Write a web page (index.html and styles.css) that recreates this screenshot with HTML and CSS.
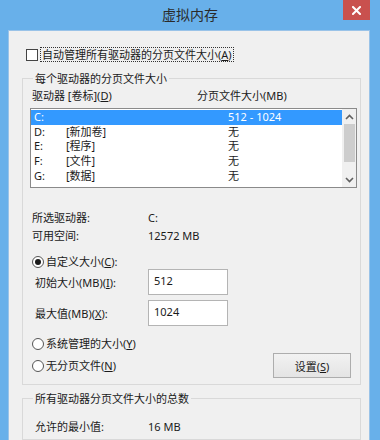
FILE: index.html
```html
<!DOCTYPE html>
<html lang="zh-CN">
<head>
<meta charset="utf-8">
<title>虚拟内存</title>
<link rel="stylesheet" href="styles.css">
</head>
<body>
<div class="window">
  <div class="titlebar">
    <span class="title">虚拟内存</span>
    <button class="close" aria-label="关闭">
      <svg width="9" height="9" viewBox="0 0 9 9"><path d="M1 1L8 8M8 1L1 8" stroke="#fff" stroke-width="2" stroke-linecap="square"/></svg>
    </button>
  </div>
  <div class="panel">
    <label class="auto">
      <span class="checkbox"></span>
      <span class="focus">自动管理所有驱动器的分页文件大小(<u>A</u>)</span>
    </label>

    <fieldset class="group g1">
      <legend>每个驱动器的分页文件大小</legend>
      <div class="cols">
        <span class="col-drive">驱动器 [卷标](<u>D</u>)</span>
        <span class="col-size">分页文件大小(MB)</span>
      </div>
      <div class="listbox">
        <div class="rows">
          <div class="row sel"><span class="drv">C:</span><span class="vol"></span><span class="sz">512 - 1024</span></div>
          <div class="row"><span class="drv">D:</span><span class="vol">[新加卷]</span><span class="sz">无</span></div>
          <div class="row"><span class="drv">E:</span><span class="vol">[程序]</span><span class="sz">无</span></div>
          <div class="row"><span class="drv">F:</span><span class="vol">[文件]</span><span class="sz">无</span></div>
          <div class="row"><span class="drv">G:</span><span class="vol">[数据]</span><span class="sz">无</span></div>
        </div>
        <div class="scrollbar">
          <span class="arrow">
            <svg width="9" height="6" viewBox="0 0 9 6"><path d="M1 5L4.5 1.5L8 5" fill="none" stroke="#606060" stroke-width="1.6"/></svg>
          </span>
          <span class="track"><span class="thumb"></span></span>
          <span class="arrow">
            <svg width="9" height="6" viewBox="0 0 9 6"><path d="M1 1L4.5 4.5L8 1" fill="none" stroke="#606060" stroke-width="1.6"/></svg>
          </span>
        </div>
      </div>

      <div class="info">
        <div class="info-row"><span class="info-key">所选驱动器:</span><span>C:</span></div>
        <div class="info-row"><span class="info-key">可用空间:</span><span>12572 MB</span></div>
      </div>

      <label class="radio custom"><span class="dot on"></span><span>自定义大小(<u>C</u>):</span></label>

      <div class="field">
        <span class="field-label">初始大小(MB)(<u>I</u>):</span>
        <span class="textbox">512</span>
      </div>
      <div class="field max">
        <span class="field-label">最大值(MB)(<u>X</u>):</span>
        <span class="textbox">1024</span>
      </div>

      <label class="radio sys"><span class="dot"></span><span>系统管理的大小(<u>Y</u>)</span></label>
      <div class="last-row">
        <label class="radio"><span class="dot"></span><span>无分页文件(<u>N</u>)</span></label>
        <button class="btn">设置(<u>S</u>)</button>
      </div>
    </fieldset>

    <fieldset class="group g2">
      <legend>所有驱动器分页文件大小的总数</legend>
      <div class="total-row"><span class="total-key">允许的最小值:</span><span>16 MB</span></div>
    </fieldset>
  </div>
</div>
</body>
</html>
```

FILE: styles.css
```css
* { box-sizing: border-box; }

html, body {
  margin: 0;
  padding: 0;
  width: 380px;
  height: 440px;
  overflow: hidden;
}

body {
  font-family: "Noto Sans", "Noto Sans CJK SC", sans-serif;
  font-size: 11px;
  color: #1a1a1a;
}

u { text-decoration: underline; text-underline-offset: 1px; }

.window {
  width: 380px;
  height: 440px;
  background: #68b0ea;
  display: flex;
  flex-direction: column;
  overflow: hidden;
}

.titlebar {
  height: 30px;
  flex: none;
  display: grid;
  grid-template-columns: 1fr auto 1fr;
  align-items: center;
}

.title {
  grid-column: 2;
  font-size: 14px;
  line-height: 28px;
  color: #2a2a2a;
  font-family: "Noto Sans CJK SC", sans-serif;
  align-self: start;
}

.close {
  grid-column: 3;
  justify-self: end;
  align-self: start;
  margin-right: 10px;
  width: 27px;
  height: 20px;
  border: none;
  padding: 0;
  background: #c9514e;
  display: flex;
  align-items: center;
  justify-content: center;
}

.panel {
  flex: 1;
  margin: 0 10px 0 8px;
  background: #f0f0f0;
  border: 1px solid #9ac3e8;
  border-bottom: none;
  padding: 0;
  display: flex;
  flex-direction: column;
}

.auto {
  display: flex;
  align-items: center;
  margin: 16px 0 0 17px;
  height: 15px;
}

.checkbox {
  width: 12px;
  height: 12px;
  border: 1px solid #444;
  background: #fff;
  flex: none;
}

.focus {
  margin-left: 2px;
  border: 1px dotted #333;
  line-height: 13px;
  padding: 0 1px;
  height: 15px;
}

.group {
  margin: 0;
  border: 1px solid #d9d9d9;
  padding: 0 3px 0 7px;
  min-width: 0;
}

.group legend {
  padding: 0 2px;
  margin-left: 3px;
  line-height: 15px;
}

.g1 {
  margin: 9px 8px 0 13px;
  padding-bottom: 6px;
}

.cols {
  display: flex;
  line-height: 15px;
  margin-top: 2px;
  padding-left: 2px;
}

.col-drive { width: 165px; }

.listbox {
  margin-top: 5px;
  height: 80px;
  border: 1px solid #8a8a8a;
  background: #fff;
  display: flex;
}

.rows {
  flex: 1;
  padding-top: 1px;
}

.row {
  display: flex;
  height: 14.7px;
  line-height: 14.7px;
  padding-left: 3px;
}

.row.sel {
  background: #3399ff;
  color: #fff;
}

.drv { width: 32px; }
.vol { width: 162px; }

.scrollbar {
  width: 14px;
  background: #f0f0f0;
  display: flex;
  flex-direction: column;
  border-left: 1px solid #f0f0f0;
}

.arrow {
  height: 15px;
  display: flex;
  align-items: center;
  justify-content: center;
}

.track {
  flex: 1;
  display: flex;
  flex-direction: column;
}

.thumb {
  margin: 0 1px;
  height: 38px;
  background: #cdcdcd;
}

.info {
  margin-top: 21px;
  padding-left: 2px;
}

.info-row {
  display: flex;
  line-height: 18px;
}

.info-key { width: 116px; }

.radio {
  display: flex;
  align-items: center;
  line-height: 14px;
}

.dot {
  width: 12px;
  height: 12px;
  border: 1px solid #555;
  border-radius: 50%;
  background: #fff;
  margin-right: 2px;
  flex: none;
  display: flex;
  align-items: center;
  justify-content: center;
}

.dot.on::after {
  content: "";
  width: 6px;
  height: 6px;
  border-radius: 50%;
  background: #1a1a1a;
}

.custom {
  margin: 10px 0 0 2px;
}

.field {
  display: flex;
  align-items: center;
  height: 26px;
}

.field.max {
  margin-top: 5px;
}

.field-label {
  width: 118px;
  padding-left: 5px;
}

.textbox {
  width: 80px;
  height: 26px;
  border: 1px solid #b4b4b4;
  background: #fff;
  padding: 3px 5px;
  line-height: 15px;
}

.sys {
  margin: 11px 0 0 2px;
}

.last-row {
  margin-top: 2px;
  height: 25px;
  display: flex;
  align-items: center;
  justify-content: space-between;
  padding-left: 2px;
  padding-right: 6px;
}

.btn {
  width: 78px;
  height: 25px;
  border: 1px solid #adadad;
  background: linear-gradient(#f2f2f2, #e4e4e4);
  font: inherit;
  color: #1a1a1a;
  padding: 0;
}

.g2 {
  margin: 6px 8px 0 13px;
  flex: 1;
}

.total-row {
  display: flex;
  margin-top: 13px;
  line-height: 16px;
  padding-left: 5px;
}

.total-key { width: 113px; }
```
